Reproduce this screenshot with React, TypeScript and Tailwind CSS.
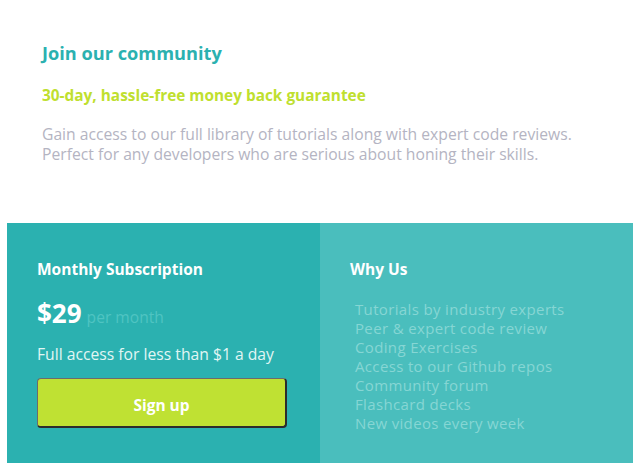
const FEATURES = [
  "Tutorials by industry experts",
  "Peer & expert code review",
  "Coding Exercises",
  "Access to our Github repos",
  "Community forum",
  "Flashcard decks",
  "New videos every week",
];

export default function App() {
  return (
    <div className="min-h-screen bg-white font-['Open_Sans',sans-serif]">
      <div className="ml-[7px] w-[626px]">
        {/* Intro */}
        <section className="px-[35px] pt-[39px] h-[223px]">
          <h1 className="text-[18.2px] leading-[28px] font-bold text-[#2bb1b0]">Join our community</h1>
          <p className="mt-[19px] text-[15.4px] leading-[20px] font-bold text-[#bfdf2f]">
            30-day, hassle-free money back guarantee
          </p>
          <p className="mt-[18px] text-[15.7px] leading-[20px] text-[#b4b4c2]">
            Gain access to our full library of tutorials along with expert code reviews.
            <br />
            Perfect for any developers who are serious about honing their skills.
          </p>
        </section>

        {/* Pricing */}
        <section className="grid grid-cols-2 h-[240px]">
          <div className="bg-[#2bb1b0] px-[30px] pt-[35px]">
            <h2 className="text-[15.5px] leading-[22px] font-bold text-white">Monthly Subscription</h2>
            <div className="mt-[18px] flex items-baseline gap-[5px] h-[30px]">
              <span className="text-[26px] leading-[30px] font-bold text-white">$29</span>
              <span className="text-[15.6px] text-[#4fc4c2]">per month</span>
            </div>
            <p className="mt-[16px] text-[15.7px] leading-[20px] text-[#e1f6f4]">Full access for less than $1 a day</p>
            <button className="mt-[14px] w-[250px] h-[50px] rounded-[4px] bg-[#bfe133] border-b-[2px] border-r-[2px] border-[#2c2c2c] border-t border-l border-t-[#6b6b6b] border-l-[#6b6b6b] pt-[7px] text-[15.5px] font-bold text-white">
              Sign up
            </button>
          </div>
          <div className="bg-[#4abebd] pl-[30px] pt-[35px]">
            <h2 className="text-[15.5px] leading-[22px] font-bold text-white">Why Us</h2>
            <ul className="mt-[20px] pl-[5px]">
              {FEATURES.map((f) => (
                <li key={f} className="text-[15px] leading-[19px] tracking-[0.35px] text-[#86d6d4]">
                  {f}
                </li>
              ))}
            </ul>
          </div>
        </section>
      </div>
    </div>
  );
}
